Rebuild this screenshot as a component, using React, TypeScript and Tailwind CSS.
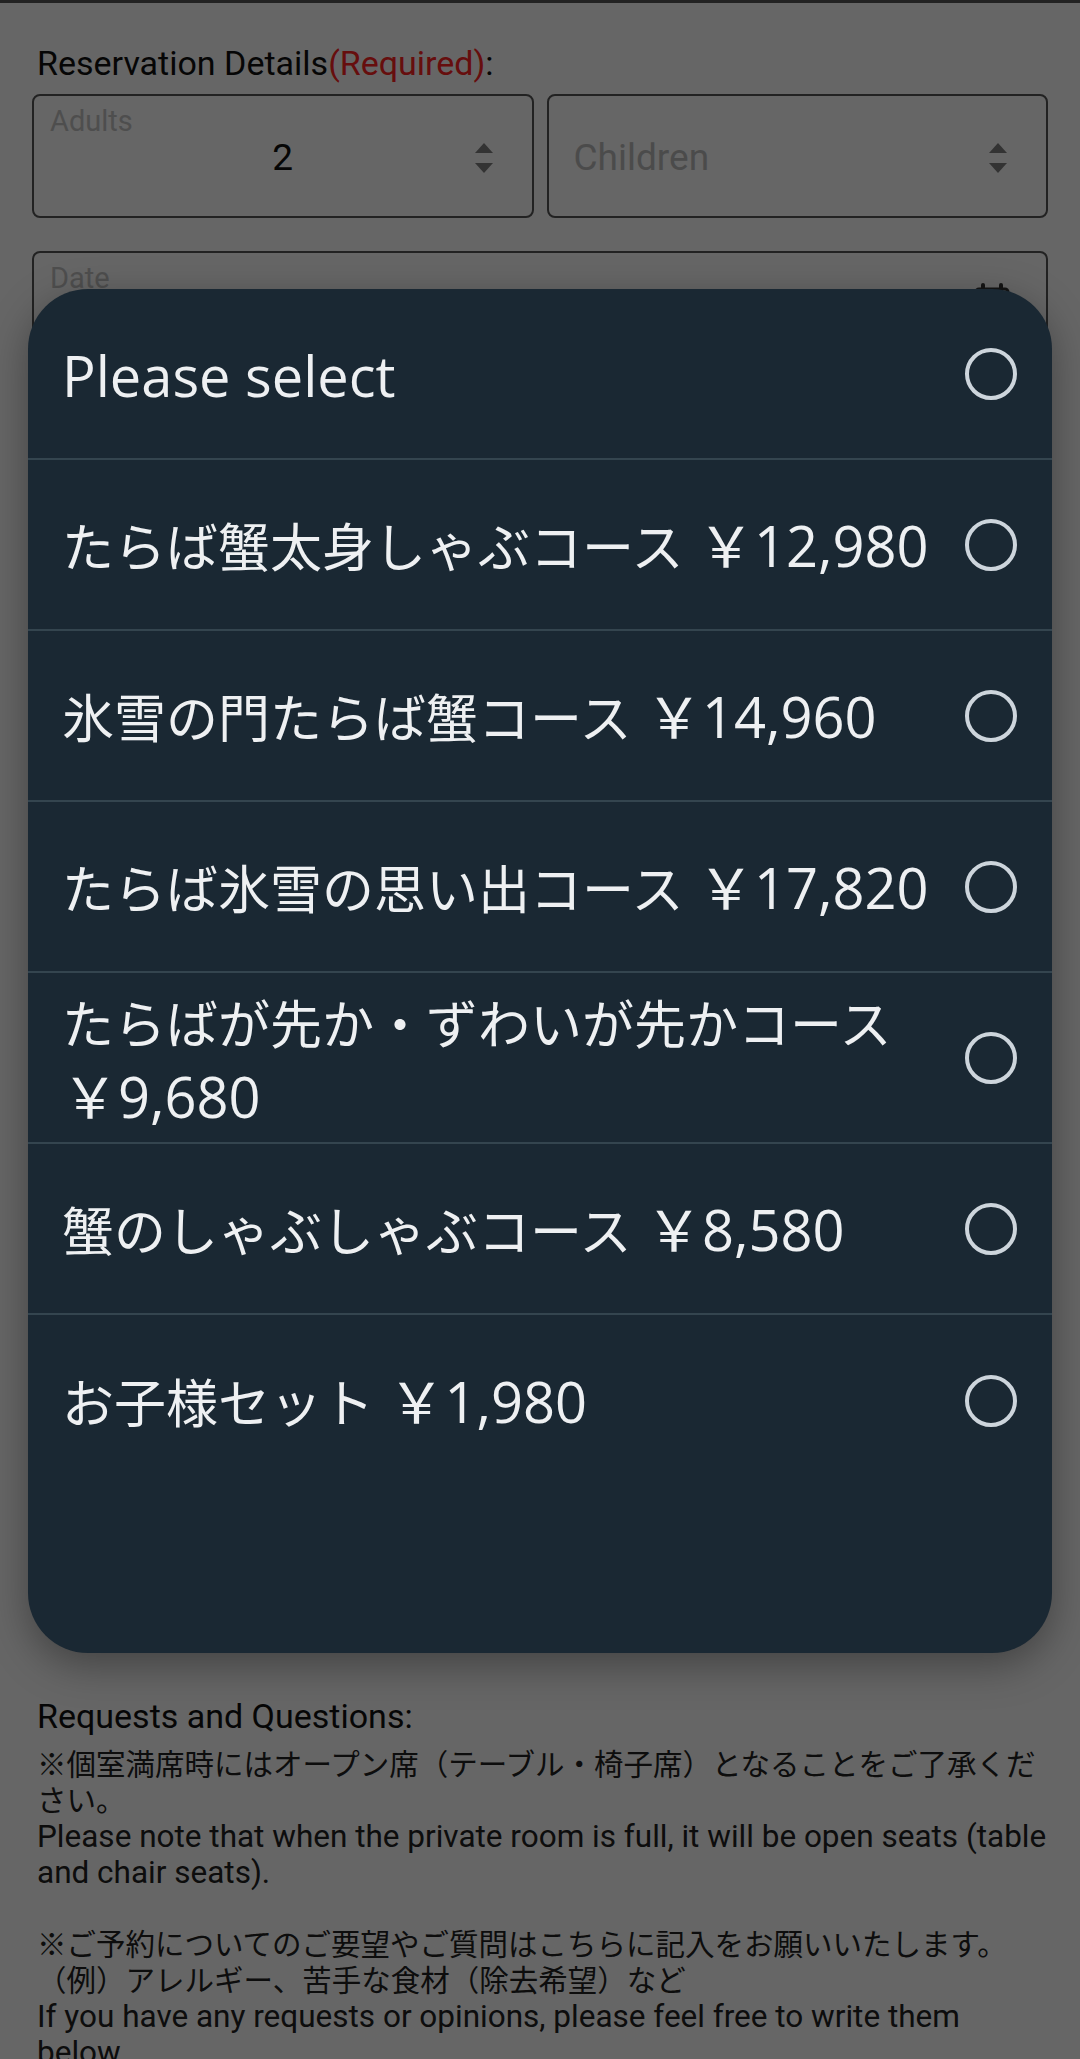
import React from "react";

const courses: [string, string][] = [
  ["Please select", ""],
  ["たらば蟹太身しゃぶコース", "￥12,980"],
  ["氷雪の門たらば蟹コース", "￥14,960"],
  ["たらば氷雪の思い出コース", "￥17,820"],
  ["たらばが先か・ずわいが先かコース", "￥9,680"],
  ["蟹のしゃぶしゃぶコース", "￥8,580"],
  ["お子様セット", "￥1,980"],
];

function Spinner() {
  return (
    <svg width="20" height="30" viewBox="0 0 20 30" className="shrink-0">
      <path d="M10 0 L19 10 L1 10 Z" fill="#808080" />
      <path d="M1 20 L19 20 L10 30 Z" fill="#808080" />
    </svg>
  );
}

function Field({ label, children }: { label?: string; children?: React.ReactNode }) {
  return (
    <div className="relative h-[124px] rounded-[8px] border-2 border-[#555555] bg-white">
      {label && (
        <span className="absolute left-[16px] top-[8px] text-[29px] leading-[34px] text-[#c4c4c4]">
          {label}
        </span>
      )}
      {children}
    </div>
  );
}

export default function App() {
  return (
    <div className="relative h-[2059px] w-[1080px] overflow-hidden bg-white font-['Roboto','Noto_Sans_CJK_JP',sans-serif] text-[#111]">
      {/* page underneath */}
      <div className="border-t-[3px] border-[#555] pl-[37px] pr-[26px]">
        <div className="pt-[42px] text-[34px] leading-[36px]">
          Reservation Details<span className="text-[#ff2424]">(Required)</span>:
        </div>

        <div className="-ml-[5px] mr-[6px] mt-[13px] grid grid-cols-2 gap-[13px]">
          <Field label="Adults">
            <div className="flex h-full items-center pl-[58px] pr-[38px] pt-[4px]">
              <span className="flex-1 text-center text-[37px]">2</span>
              <Spinner />
            </div>
          </Field>
          <Field>
            <div className="flex h-full items-center pl-[25px] pr-[38px] pt-[4px]">
              <span className="flex-1 text-[37px] text-[#bcbcbc]">Children</span>
              <Spinner />
            </div>
          </Field>
        </div>

        <div className="-ml-[5px] mr-[6px] mt-[33px] flex h-[1414px] flex-col gap-[33px] overflow-hidden">
          <Field label="Date">
            <svg
              width="36"
              height="40"
              viewBox="0 0 36 40"
              className="absolute right-[36px] top-[30px]"
            >
              <rect x="2" y="6" width="32" height="32" rx="3" fill="none" stroke="#333" strokeWidth="3" />
              <rect x="7" y="0" width="4" height="10" rx="2" fill="#333" />
              <rect x="25" y="0" width="4" height="10" rx="2" fill="#333" />
            </svg>
          </Field>
          <Field />
          <Field />
          <Field />
          <Field />
          <Field />
        </div>

        <div className="mt-[33px] text-[34px] leading-[36px]">Requests and Questions:</div>
        <div className="mt-[13px] text-[31.5px] leading-[36px] text-[#222]">
          <p>
            <span className="text-[29.5px]">
              ※個室満席時にはオープン席（テーブル・椅子席）となることをご了承ください。
            </span>
            <br />
            Please note that when the private room is full, it will be open seats (table and chair seats).
          </p>
          <p className="mt-[36px]">
            <span className="text-[29.5px]">
              ※ご予約についてのご要望やご質問はこちらに記入をお願いいたします。
              <br />
              （例）アレルギー、苦手な食材（除去希望）など
            </span>
            <br />
            If you have any requests or opinions, please feel free to write them below.
          </p>
        </div>
      </div>

      {/* backdrop */}
      <div className="absolute inset-0 bg-black/60" />

      {/* course picker */}
      <div className="absolute left-[28px] top-[289px] h-[1364px] w-[1024px] overflow-hidden rounded-[60px] bg-[#1a2833] shadow-[0_12px_40px_rgba(0,0,0,0.35)] font-['Open_Sans','Noto_Sans_CJK_JP',sans-serif]">
        {courses.map(([name, price], i) => (
          <div
            key={name}
            className={
              i < courses.length - 1
                ? "flex h-[171px] items-center gap-[16px] border-b-2 border-[#34454f] pl-[34px] pr-[35px]"
                : "flex h-[171px] items-center gap-[16px] pl-[34px] pr-[35px]"
            }
          >
            <span className="min-w-0 flex-1 pt-[2px] text-[56px] leading-[72px] text-[#eef0f2]">
              <span className={price ? "text-[52px]" : ""}>{name}</span>
              {price && <span> {price}</span>}
            </span>
            <span className="h-[52px] w-[52px] shrink-0 rounded-full border-[4.5px] border-[#cdd5dc]" />
          </div>
        ))}
      </div>
    </div>
  );
}
